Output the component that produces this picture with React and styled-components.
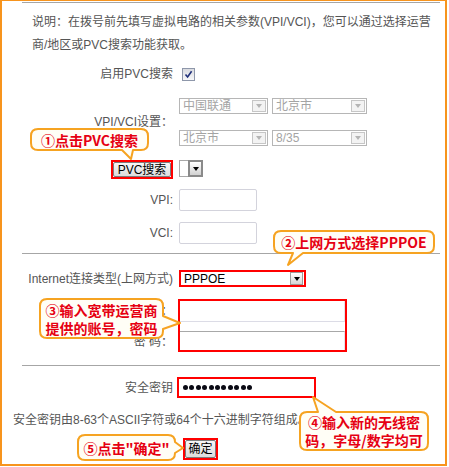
import React from 'react';
import styled, { createGlobalStyle } from 'styled-components';

const GlobalStyle = createGlobalStyle`
  html, body { margin: 0; padding: 0; background: #fff; }
  body { font-family: "Liberation Sans", "Noto Sans CJK SC", sans-serif; }
`;

const Page = styled.div`
  position: relative;
  width: 447px;
  height: 466px;
`;

const Frame = styled.div`
  box-sizing: border-box;
  width: 447px;
  height: 466px;
  border: 2px solid #f7941d;
  border-top-width: 1px;
  font-size: 12px;
  color: #555;
`;

const Divider = styled.div`
  height: 1px;
  background: #a6a6a6;
  margin: ${(p) => p.$mt}px 5px 0 20px;
`;

const Note = styled.p`
  margin: 8px 0 0;
  padding: 0 10px 0 30px;
  line-height: 23px;
`;

const Row = styled.div`
  display: grid;
  grid-template-columns: 171px auto;
  column-gap: 6px;
  align-items: center;
  justify-content: start;
  margin-top: ${(p) => p.$mt}px;
`;

const Label = styled.div`
  display: flex;
  justify-content: flex-end;
  align-items: center;
  white-space: pre;
  line-height: 16px;
  height: ${(p) => (p.$h ? `${p.$h}px` : 'auto')};
`;

const LabelStack = styled.div`
  display: flex;
  flex-direction: column;
  padding-top: ${(p) => p.$pt}px;
  gap: ${(p) => p.$gap}px;
`;

const CheckBox = styled.span`
  box-sizing: border-box;
  display: inline-flex;
  align-items: center;
  justify-content: center;
  width: 13px;
  height: 13px;
  margin-left: 3px;
  border: 1px solid #8e97aa;
  background: linear-gradient(#d9dbe0, #f7f7f9);
`;

const SelectStack = styled.div`
  display: flex;
  flex-direction: column;
  gap: 16px;
`;

const SelectPair = styled.div`
  display: flex;
  gap: 4px;
`;

const SelectBox = styled.div`
  box-sizing: border-box;
  display: flex;
  align-items: center;
  justify-content: space-between;
  width: ${(p) => p.$w}px;
  height: ${(p) => p.$h}px;
  padding-left: ${(p) => (p.$pl ?? 3)}px;
  border: ${(p) => (p.$red ? '2px solid #ff0000' : `1px solid ${p.$disabled ? '#b6b6b6' : '#a8a8a8'}`)};
  background: #fff;
  color: ${(p) => (p.$disabled ? '#a4a4a4' : '#000')};
  font-size: 12px;
  line-height: 1;
`;

const DropBtn = styled.span`
  box-sizing: border-box;
  display: flex;
  align-items: center;
  justify-content: center;
  width: ${(p) => p.$w}px;
  height: ${(p) => p.$h}px;
  margin: ${(p) => p.$m || '0 1px 0 0'};
  border: ${(p) => p.$bw || 1}px solid ${(p) => p.$border};
  background: ${(p) => p.$bg};
`;

const Arrow = styled.span`
  width: 0;
  height: 0;
  border-left: 3.5px solid transparent;
  border-right: 3.5px solid transparent;
  border-top: 4px solid ${(p) => p.$color};
`;

const RedRing = styled.span`
  box-sizing: border-box;
  display: inline-flex;
  width: ${(p) => p.$w}px;
  height: ${(p) => p.$h}px;
  margin-left: ${(p) => p.$ml || 0}px;
  border: 2px solid #ff0000;
`;

const PushButton = styled.button`
  flex: 1;
  margin: 0;
  padding: 0;
  border: 1px solid #7c7c7c;
  border-radius: 2px;
  background: linear-gradient(#f7f7f7, #dcdcdc);
  font: 12px "Liberation Sans", "Noto Sans CJK SC", sans-serif;
  color: #000;
  line-height: 1;
`;

const TextInput = styled.input`
  box-sizing: border-box;
  display: block;
  width: 78px;
  height: 22px;
  margin: 0;
  padding: 0 3px;
  border: 1px solid #d3d3dc;
  border-radius: 2px;
  background: #fff;
`;

const AccountFrame = styled.div`
  box-sizing: border-box;
  display: flex;
  flex-direction: column;
  width: 169px;
  height: 53px;
  margin-left: -1px;
  border: 2px solid #ff0000;
`;

const AccountField = styled.div`
  box-sizing: border-box;
  width: 165px;
  height: ${(p) => p.$h}px;
  margin-top: ${(p) => p.$mt || 0}px;
  border-right: 1px solid #e3e3ea;
  border-top: ${(p) => (p.$top ? '1px solid #a8a8a8' : 'none')};
  border-bottom: ${(p) => (p.$bottom ? '1px solid #dcdce6' : 'none')};
`;

const KeyField = styled.div`
  box-sizing: border-box;
  display: flex;
  align-items: center;
  gap: 1.4px;
  width: 139px;
  height: 21px;
  margin-left: -2px;
  padding-left: 4px;
  border: 2px solid #ff0000;
`;

const Dot = styled.span`
  width: 5px;
  height: 5px;
  border-radius: 50%;
  background: #0a0a14;
`;

const Hint = styled.div`
  margin-top: 13px;
  padding-left: 11px;
  line-height: 18px;
  white-space: nowrap;
`;

const BubbleBox = styled.div`
  position: absolute;
  left: ${(p) => p.$x}px;
  top: ${(p) => p.$y}px;
  width: ${(p) => p.$w}px;
  height: ${(p) => p.$h}px;
  display: flex;
  align-items: center;
  justify-content: center;
  font: bold 14px/18px "Noto Sans CJK SC", sans-serif;
  color: #e60012;
  text-align: center;
  white-space: nowrap;
`;

const BubbleShape = styled.svg`
  position: absolute;
  left: 0;
  top: 0;
  overflow: visible;
`;

const BubbleText = styled.span`
  position: relative;
`;

const bubblePath = (w, h, r, t) => {
  let d = `M${r},0 `;
  if (t.side === 'top') d += `L${t.a},0 L${t.tx},${t.ty} L${t.b},0 `;
  d += `L${w - r},0 Q${w},0 ${w},${r} `;
  if (t.side === 'right') d += `L${w},${t.a} L${t.tx},${t.ty} L${w},${t.b} `;
  d += `L${w},${h - r} Q${w},${h} ${w - r},${h} `;
  if (t.side === 'bottom') d += `L${t.b},${h} L${t.tx},${t.ty} L${t.a},${h} `;
  d += `L${r},${h} Q0,${h} 0,${h - r} L0,${r} Q0,0 ${r},0 Z`;
  return d;
};

function Bubble({ x, y, w, h, tail, children }) {
  return (
    <BubbleBox $x={x} $y={y} $w={w} $h={h}>
      <BubbleShape width={w} height={h} viewBox={`0 0 ${w} ${h}`}>
        <path d={bubblePath(w, h, 7, tail)} fill="#fffef6" stroke="#f6a321" strokeWidth="2" strokeLinejoin="round" />
      </BubbleShape>
      <BubbleText>{children}</BubbleText>
    </BubbleBox>
  );
}

function DisabledSelect({ w, children }) {
  return (
    <SelectBox $w={w} $h={16} $disabled>
      <span>{children}</span>
      <DropBtn $w={14} $h={12} $border="#c6c6c6" $bg="#f3f3f3">
        <Arrow $color="#b4b4b4" />
      </DropBtn>
    </SelectBox>
  );
}

export default function App() {
  return (
    <Page>
      <GlobalStyle />
      <Frame>
        <Divider $mt={1} />
        <Note>说明：在拨号前先填写虚拟电路的相关参数(VPI/VCI)，您可以通过选择运营商/地区或PVC搜索功能获取。</Note>

        <Row $mt={9}>
          <Label>启用PVC搜索</Label>
          <CheckBox>
            <svg width="9" height="9" viewBox="0 0 9 9">
              <path d="M1.5 4.5 L3.6 7 L7.6 1.3" fill="none" stroke="#20307a" strokeWidth="1.6" />
            </svg>
          </CheckBox>
        </Row>

        <Row $mt={16}>
          <Label>VPI/VCI设置：</Label>
          <SelectStack>
            <SelectPair>
              <DisabledSelect w={89}>中国联通</DisabledSelect>
              <DisabledSelect w={95}>北京市</DisabledSelect>
            </SelectPair>
            <SelectPair>
              <DisabledSelect w={89}>北京市</DisabledSelect>
              <DisabledSelect w={95}>8/35</DisabledSelect>
            </SelectPair>
          </SelectStack>
        </Row>

        <Row $mt={14}>
          <Label>
            <RedRing $w={62} $h={19}>
              <PushButton type="button">PVC搜索</PushButton>
            </RedRing>
          </Label>
          <SelectBox $w={24} $h={17} $pl={0} style={{ alignSelf: 'start' }}>
            <span />
            <DropBtn $w={15} $h={17} $m="-1px -1px -1px 0" $bw={2} $border="#8a8a8a" $bg="linear-gradient(#ffffff, #d2d2d2)">
              <Arrow $color="#000" />
            </DropBtn>
          </SelectBox>
        </Row>

        <Row $mt={10}>
          <Label>VPI:</Label>
          <TextInput />
        </Row>

        <Row $mt={11}>
          <Label>VCI:</Label>
          <TextInput />
        </Row>

        <Divider $mt={9} />

        <Row $mt={16}>
          <Label>Internet连接类型(上网方式)</Label>
          <SelectBox $w={127} $h={17} $red $pl={3}>
            <span>PPPOE</span>
            <DropBtn $w={13} $h={13} $border="#9c9c9c" $bg="linear-gradient(#ffffff, #d6d6d6)">
              <Arrow $color="#000" />
            </DropBtn>
          </SelectBox>
        </Row>

        <Row $mt={12}>
          <LabelStack $pt={1} $gap={13}>
            <Label $h={18}>用户名：</Label>
            <Label $h={18}>密 码：</Label>
          </LabelStack>
          <AccountFrame>
            <AccountField $h={21} $bottom />
            <AccountField $h={19} $mt={9} $top />
          </AccountFrame>
        </Row>

        <Divider $mt={13} />

        <Row $mt={11}>
          <Label>安全密钥</Label>
          <KeyField>
            {Array.from({ length: 11 }).map((_, i) => (
              <Dot key={i} />
            ))}
          </KeyField>
        </Row>

        <Hint>安全密钥由8-63个ASCII字符或64个十六进制字符组成。</Hint>

        <Row $mt={9}>
          <span />
          <RedRing $w={35} $h={22} $ml={4}>
            <PushButton type="button">确定</PushButton>
          </RedRing>
        </Row>
      </Frame>

      <Bubble x={31} y={129} w={117} h={21} tail={{ side: 'bottom', a: 91, b: 102, tx: 100, ty: 30 }}>
        ①点击PVC搜索
      </Bubble>
      <Bubble x={274} y={231} w={160} h={22} tail={{ side: 'bottom', a: 19, b: 29, tx: 14, ty: 34 }}>
        ②上网方式选择PPPOE
      </Bubble>
      <Bubble x={40} y={299} w={123} h={39} tail={{ side: 'right', a: 17, b: 30, tx: 140, ty: 24 }}>
        ③输入宽带运营商
        <br />
        提供的账号，密码
      </Bubble>
      <Bubble x={300} y={412} w={128} h={38} tail={{ side: 'top', a: 18, b: 36, tx: 13, ty: -15 }}>
        ④输入新的无线密
        <br />
        码，字母/数字均可
      </Bubble>
      <Bubble x={78} y={435} w={97} h={25} tail={{ side: 'right', a: 7, b: 18, tx: 105, ty: 13 }}>
        ⑤点击"确定"
      </Bubble>
    </Page>
  );
}
